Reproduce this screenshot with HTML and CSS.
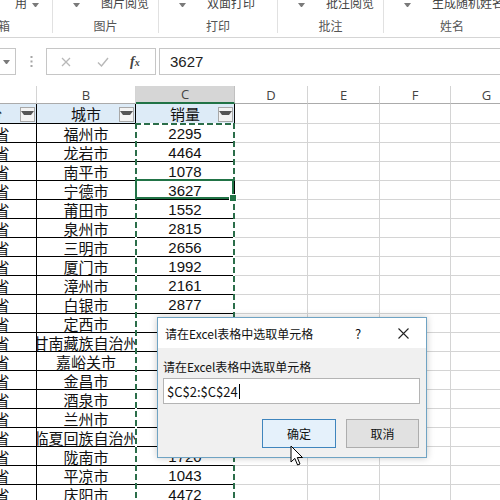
FILE: index.html
```html
<!DOCTYPE html>
<html>
<head>
<meta charset="utf-8">
<link rel="stylesheet" href="styles.css">
</head>
<body>
<div class="ribbon">
  <div class="grp g0"><div class="top"><span class="txt">用</span><span class="arr"></span></div><div class="lbl">工具箱</div></div>
  <div class="grp g1"><div class="top"><span class="arr"></span><span class="txt">图片阅览</span></div><div class="lbl">图片</div></div>
  <div class="grp g2"><div class="top"><span class="arr"></span><span class="txt">双面打印</span></div><div class="lbl">打印</div></div>
  <div class="grp g3"><div class="top"><span class="arr"></span><span class="txt">批注阅览</span></div><div class="lbl">批注</div></div>
  <div class="grp g4"><div class="top"><span class="arr"></span><span class="txt">生成随机姓名</span></div><div class="lbl">姓名</div></div>
</div>

<div class="fbar">
  <div class="namebox"><span class="tri"></span></div>
  <div class="dots"><svg width="3" height="11" viewBox="0 0 3 11"><rect x="0.5" y="0" width="2" height="2" fill="#a6a6a6"/><rect x="0.5" y="4.5" width="2" height="2" fill="#a6a6a6"/><rect x="0.5" y="9" width="2" height="2" fill="#a6a6a6"/></svg></div>
  <div class="fxbox">
    <svg class="ix" width="10" height="10" viewBox="0 0 10 10"><path d="M1 1L9 9M9 1L1 9" stroke="#b8b8b8" stroke-width="1.3" fill="none"/></svg>
    <svg class="iok" width="12" height="10" viewBox="0 0 12 10"><path d="M1 5.5L4.5 9L11 1" stroke="#b8b8b8" stroke-width="1.4" fill="none"/></svg>
    <span class="fx">f<small>x</small></span>
  </div>
  <div class="input">3627</div>
</div>

<div class="sheet">
  <div class="ch">A</div><div class="ch">B</div><div class="ch sel">C</div><div class="ch">D</div><div class="ch">E</div><div class="ch">F</div><div class="ch">G</div>

  <div class="c h"><span>省份</span><i class="flt"></i></div><div class="c h"><span>城市</span><i class="flt"></i></div><div class="c h"><span>销量</span><i class="flt"></i></div><div class="e"></div><div class="e"></div><div class="e"></div><div class="e"></div>

  <div class="c">福建省</div><div class="c">福州市</div><div class="c n">2295</div><div class="e"></div><div class="e"></div><div class="e"></div><div class="e"></div>
  <div class="c">福建省</div><div class="c">龙岩市</div><div class="c n">4464</div><div class="e"></div><div class="e"></div><div class="e"></div><div class="e"></div>
  <div class="c">福建省</div><div class="c">南平市</div><div class="c n">1078</div><div class="e"></div><div class="e"></div><div class="e"></div><div class="e"></div>
  <div class="c">福建省</div><div class="c">宁德市</div><div class="c n act">3627</div><div class="e"></div><div class="e"></div><div class="e"></div><div class="e"></div>
  <div class="c">福建省</div><div class="c">莆田市</div><div class="c n">1552</div><div class="e"></div><div class="e"></div><div class="e"></div><div class="e"></div>
  <div class="c">福建省</div><div class="c">泉州市</div><div class="c n">2815</div><div class="e"></div><div class="e"></div><div class="e"></div><div class="e"></div>
  <div class="c">福建省</div><div class="c">三明市</div><div class="c n">2656</div><div class="e"></div><div class="e"></div><div class="e"></div><div class="e"></div>
  <div class="c">福建省</div><div class="c">厦门市</div><div class="c n">1992</div><div class="e"></div><div class="e"></div><div class="e"></div><div class="e"></div>
  <div class="c">福建省</div><div class="c">漳州市</div><div class="c n">2161</div><div class="e"></div><div class="e"></div><div class="e"></div><div class="e"></div>
  <div class="c">甘肃省</div><div class="c">白银市</div><div class="c n">2877</div><div class="e"></div><div class="e"></div><div class="e"></div><div class="e"></div>
  <div class="c">甘肃省</div><div class="c">定西市</div><div class="c n"></div><div class="e"></div><div class="e"></div><div class="e"></div><div class="e"></div>
  <div class="c">甘肃省</div><div class="c">甘南藏族自治州</div><div class="c n"></div><div class="e"></div><div class="e"></div><div class="e"></div><div class="e"></div>
  <div class="c">甘肃省</div><div class="c">嘉峪关市</div><div class="c n"></div><div class="e"></div><div class="e"></div><div class="e"></div><div class="e"></div>
  <div class="c">甘肃省</div><div class="c">金昌市</div><div class="c n"></div><div class="e"></div><div class="e"></div><div class="e"></div><div class="e"></div>
  <div class="c">甘肃省</div><div class="c">酒泉市</div><div class="c n"></div><div class="e"></div><div class="e"></div><div class="e"></div><div class="e"></div>
  <div class="c">甘肃省</div><div class="c">兰州市</div><div class="c n"></div><div class="e"></div><div class="e"></div><div class="e"></div><div class="e"></div>
  <div class="c">甘肃省</div><div class="c">临夏回族自治州</div><div class="c n"></div><div class="e"></div><div class="e"></div><div class="e"></div><div class="e"></div>
  <div class="c">甘肃省</div><div class="c">陇南市</div><div class="c n">1720</div><div class="e"></div><div class="e"></div><div class="e"></div><div class="e"></div>
  <div class="c">甘肃省</div><div class="c">平凉市</div><div class="c n">1043</div><div class="e"></div><div class="e"></div><div class="e"></div><div class="e"></div>
  <div class="c">甘肃省</div><div class="c">庆阳市</div><div class="c n">4472</div><div class="e"></div><div class="e"></div><div class="e"></div><div class="e"></div>

  <div class="ants"></div>
</div>

<div class="dlg">
  <div class="dlg-title">
    <span class="dlg-name">请在Excel表格中选取单元格</span>
    <span class="help">?</span>
    <span class="close"><svg width="11" height="11" viewBox="0 0 11 11"><path d="M0.5 0.5L10.5 10.5M10.5 0.5L0.5 10.5" stroke="#222" stroke-width="1.1" fill="none"/></svg></span>
  </div>
  <div class="dlg-body">
    <div class="dlg-label">请在Excel表格中选取单元格</div>
    <div class="inp"><span>$C$2:$C$24</span><span class="caret"></span></div>
    <div class="btns">
      <div class="btn ok">确定</div>
      <div class="btn cancel">取消</div>
    </div>
  </div>
</div>

<svg class="cursor" width="14" height="22" viewBox="0 0 14 22"><path d="M1 1L1 17L4.8 13.4L7.6 20L10 19L7.3 12.5L12.5 12.5Z" fill="#fff" stroke="#000" stroke-width="1" stroke-linejoin="round"/></svg>
</body>
</html>
```
FILE: styles.css
```css
* { box-sizing: border-box; }
html, body { margin: 0; padding: 0; }
body {
  width: 500px;
  height: 500px;
  overflow: hidden;
  position: relative;
  background: #fff;
  font-family: "Noto Sans CJK SC", sans-serif;
  color: #222;
}

/* ribbon */
.ribbon {
  height: 38px;
  border-bottom: 1px solid #d5d5d5;
  display: flex;
  overflow: hidden;
  background: #fff;
}
.grp {
  flex: none;
  height: 33px;
  border-right: 1px solid #e1e1e1;
  font-size: 12px;
  color: #444;
}
.g0 { margin-left: -68px; width: 121px; }
.g1 { width: 106px; }
.g2 { width: 119px; }
.g3 { width: 106px; }
.g4 { width: 136px; border-right: none; }
.top {
  display: flex;
  align-items: center;
  height: 16px;
  line-height: 16px;
  margin-top: -5px;
  padding-left: 20px;
  white-space: nowrap;
}
.g0 .top { padding-left: 83px; }
.arr {
  flex: none;
  width: 7px;
  height: 4px;
  margin-top: 4px;
  border-left: 3.5px solid transparent;
  border-right: 3.5px solid transparent;
  border-top: 4px solid #7a7a7a;
}
.g0 .arr { margin-left: 5px; }
.grp:not(.g0) .txt { margin-left: 21px; }
.lbl {
  margin-top: 7px;
  line-height: 16px;
  text-align: center;
  color: #555;
  white-space: nowrap;
}

/* formula bar */
.fbar {
  display: flex;
  height: 27px;
  margin-top: 10px;
}
.namebox {
  flex: none;
  margin-left: -16px;
  width: 32px;
  border: 1px solid #c6c6c6;
  display: flex;
  align-items: center;
  justify-content: flex-end;
  padding-right: 5px;
}
.tri {
  width: 7px;
  height: 4px;
  border-left: 3.5px solid transparent;
  border-right: 3.5px solid transparent;
  border-top: 4px solid #7a7a7a;
}
.dots {
  flex: none;
  width: 30px;
  display: flex;
  align-items: center;
  justify-content: center;
}
.fxbox {
  flex: none;
  width: 110px;
  border: 1px solid #c6c6c6;
  display: flex;
  align-items: center;
}
.ix { margin-left: 14px; }
.iok { margin-left: 26px; }
.fx {
  margin-left: 21px;
  font-family: "Liberation Serif", serif;
  font-style: italic;
  font-weight: bold;
  font-size: 14px;
  color: #444;
}
.fx small { font-size: 10px; }
.input {
  flex: 1;
  margin-left: 3px;
  margin-right: -10px;
  border: 1px solid #c6c6c6;
  padding-left: 10px;
  display: flex;
  align-items: center;
  font-family: "Liberation Sans", sans-serif;
  font-size: 15px;
  color: #222;
}

/* sheet */
.sheet {
  position: relative;
  margin-top: 11px;
  margin-left: -62px;
  display: grid;
  grid-template-columns: 99px 99px 99px 73px 72px 71px 72px;
  grid-template-rows: 18px 20px;
  grid-auto-rows: 19px;
}
.ch {
  border-right: 1px solid #d4d4d4;
  border-bottom: 1px solid #ababab;
  display: flex;
  align-items: center;
  justify-content: center;
  font-family: "Open Sans", sans-serif;
  font-size: 13px;
  color: #444;
}
.ch.sel {
  background: #d6d6d6;
  border-bottom: 2px solid #217346;
  border-right-color: #c0c0c0;
}
.c {
  border-right: 1px solid #000;
  border-bottom: 1px solid #000;
  display: flex;
  align-items: center;
  justify-content: center;
  overflow: hidden;
  white-space: nowrap;
  font-size: 15px;
  color: #111;
}
.c.n { font-family: "Liberation Sans", "Noto Sans CJK SC", sans-serif; }
.c.h {
  display: grid;
  grid-template-columns: 100%;
  grid-template-rows: 100%;
  justify-content: stretch;
  align-items: center;
  background: #ddebf7;
}
.c.h > * { grid-area: 1 / 1; }
.c.h span { justify-self: center; }
.flt {
  justify-self: end;
  align-self: end;
  margin: 0 1px 1px 0;
  width: 15px;
  height: 15px;
  border: 1px solid #a8a8a8;
  background: #f3f3f3;
  display: flex;
  align-items: center;
  justify-content: center;
}
.flt::before {
  content: "";
  width: 7px;
  height: 4px;
  border-left: 3.5px solid transparent;
  border-right: 3.5px solid transparent;
  border-top: 4px solid #555;
}
.e {
  border-right: 1px solid #d4d4d4;
  border-bottom: 1px solid #d4d4d4;
}
.act { position: relative; overflow: visible; z-index: 2; }
.act::after {
  content: "";
  position: absolute;
  top: -2px;
  left: -1px;
  right: 0;
  bottom: 0;
  border: 2px solid #217346;
}
.act::before {
  content: "";
  position: absolute;
  right: -3px;
  bottom: -3px;
  width: 6px;
  height: 6px;
  background: #217346;
  border: 1px solid #fff;
  z-index: 3;
}
.ants {
  position: absolute;
  left: 197px;
  top: 37px;
  width: 100px;
  height: 480px;
  z-index: 1;
  background:
    repeating-linear-gradient(to bottom, #2b6e4a 0 6px, #fff 6px 9px) left top / 2px 100% no-repeat,
    repeating-linear-gradient(to bottom, #2b6e4a 0 6px, #fff 6px 9px) right top / 2px 100% no-repeat,
    repeating-linear-gradient(to right, #2b6e4a 0 6px, #fff 6px 9px) left top / 100% 2px no-repeat;
}

/* dialog */
.dlg {
  position: absolute;
  left: 157px;
  top: 317px;
  width: 270px;
  height: 141px;
  z-index: 5;
  border: 1px solid #6fa3c3;
  background: #f0f0f0;
  box-shadow: 0 0 7px rgba(0, 0, 0, 0.22);
  display: flex;
  flex-direction: column;
  font-size: 12px;
  color: #111;
}
.dlg-title {
  flex: none;
  height: 30px;
  background: #fff;
  display: flex;
  align-items: center;
  padding-left: 7px;
}
.dlg-name { flex: 1; white-space: nowrap; }
.help {
  width: 24px;
  margin-right: 11px;
  text-align: center;
  font-size: 13px;
}
.close {
  width: 45px;
  display: flex;
  justify-content: center;
}
.dlg-body { padding: 11px 6px 0 5px; }
.dlg-label { line-height: 16px; white-space: nowrap; }
.inp {
  margin-top: 3px;
  height: 26px;
  border: 1px solid #b4b4b4;
  background: #fff;
  display: flex;
  align-items: center;
  padding-left: 3px;
  font-size: 13px;
}
.caret {
  width: 1px;
  height: 15px;
  background: #000;
  margin-left: 1px;
}
.btns {
  display: flex;
  justify-content: flex-end;
  gap: 10px;
  margin-top: 15px;
  padding-right: 1px;
}
.btn {
  height: 29px;
  display: flex;
  align-items: center;
  justify-content: center;
  font-size: 12px;
}
.btn.ok {
  width: 74px;
  border: 1px solid #3f85bd;
  background: #e5f1fb;
}
.btn.cancel {
  width: 73px;
  border: 1px solid #adadad;
  background: #e1e1e1;
}
.cursor {
  position: absolute;
  left: 290px;
  top: 445px;
  z-index: 10;
}
```
